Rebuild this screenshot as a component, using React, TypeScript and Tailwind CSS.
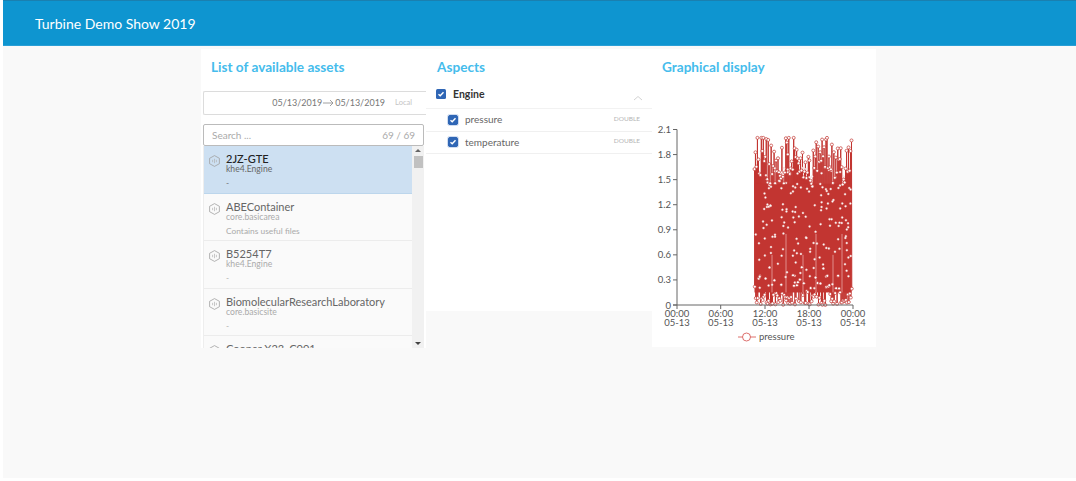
import React from "react";

const font = { fontFamily: '"Lato", "Open Sans", sans-serif' };

function rng(seed: number) {
  let s = seed;
  return () => {
    s = (s * 16807) % 2147483647;
    return (s - 1) / 2147483646;
  };
}

const W = 224;
const H = 240;
const toX = (x: number) => x - 652;
const toY = (v: number) => 198 - v * (175.5 / 2.1);

function buildPoints() {
  const r = rng(424242);
  const top: [number, number][] = [];
  const low: [number, number][] = [];
  const mid: [number, number][] = [];
  const n = 100;
  for (let i = 0; i < n; i++) {
    const x = 754.5 + (i / (n - 1)) * 97;
    const wave = 0.1 * Math.sin(i / 5);
    top.push([toX(x), toY(Math.min(2, 1.45 + wave + r() * 0.55))]);
    low.push([toX(x + 0.3), toY(r() * r() * 0.5)]);
  }
  for (let i = 0; i < 170; i++) {
    mid.push([toX(755 + r() * 96), toY(0.2 + r() * 1.45)]);
  }
  return { top, low, mid };
}

function Chart() {
  const { top, low, mid } = buildPoints();
  const zig = top.flatMap((p, i) => [p, low[i]]);
  const line = zig.map((p) => p.join(",")).join(" ");
  const yt = ["0", "0.3", "0.6", "0.9", "1.2", "1.5", "1.8", "2.1"];
  const xt = [
    [677, "00:00", "05-13"],
    [720.7, "06:00", "05-13"],
    [765, "12:00", "05-13"],
    [809, "18:00", "05-13"],
    [853, "00:00", "05-14"],
  ] as [number, string, string][];
  const slits = [772, 786, 803, 816, 833, 842];
  return (
    <svg width={W} height={H} viewBox={`0 0 ${W} ${H}`} className="block" style={{ fontFamily: '"Lato", sans-serif' }}>
      <polyline points={line} fill="none" stroke="#c23531" strokeWidth={1} />
      <rect x={toX(754.5)} y={toY(1.45)} width={97} height={toY(0.15) - toY(1.45)} fill="#c23531" />
      {slits.map((x, i) => (
        <line key={i} x1={toX(x)} x2={toX(x)} y1={toY(i % 2 ? 0.85 : 0.6)} y2={toY(0.15)} stroke="#e8a5a3" strokeWidth={0.8} />
      ))}
      {mid.map((p, i) => (
        <circle key={i} cx={p[0]} cy={p[1]} r={1} fill="#fff" stroke="#e9b5b3" strokeWidth={0.4} />
      ))}
      {top.concat(low).map((p, i) => (
        <circle key={i} cx={p[0]} cy={p[1]} r={1.5} fill="#fff" stroke="#c23531" strokeWidth={0.7} />
      ))}
      <line x1={toX(677)} x2={toX(677)} y1={toY(2.1)} y2={toY(0)} stroke="#666" strokeWidth={1} />
      <line x1={toX(673)} x2={toX(853)} y1={toY(0)} y2={toY(0)} stroke="#666" strokeWidth={1} />
      {yt.map((t, i) => {
        const v = i * 0.3;
        return (
          <g key={t}>
            <line x1={toX(673)} x2={toX(677)} y1={toY(v)} y2={toY(v)} stroke="#666" />
            <text x={toX(671)} y={toY(v) + 3.5} textAnchor="end" fontSize={9.5} fill="#555">{t}</text>
          </g>
        );
      })}
      {xt.map(([x, a, b], i) => (
        <g key={i}>
          <line x1={toX(x)} x2={toX(x)} y1={toY(0)} y2={toY(0) + 4} stroke="#666" />
          <text x={toX(x)} y={210} textAnchor="middle" fontSize={9.5} fill="#555">{a}</text>
          <text x={toX(x)} y={219} textAnchor="middle" fontSize={9.5} fill="#555">{b}</text>
        </g>
      ))}
      <line x1={86} x2={104} y1={230} y2={230} stroke="#d9605c" strokeWidth={0.9} />
      <circle cx={94.5} cy={230} r={4} fill="#fff" stroke="#d9605c" strokeWidth={0.9} />
      <text x={107} y={233} fontSize={9.5} fill="#555">pressure</text>
    </svg>
  );
}

function AssetIcon() {
  return (
    <svg width="11" height="12" viewBox="0 0 11 12" className="shrink-0 mt-[2px]">
      <path d="M5.5.6 10.4 3.3v5.4L5.5 11.4.6 8.7V3.3z" fill="none" stroke="#a0a0a0" strokeWidth="0.8" />
      <path d="M3.6 4.8v2.4M5.5 3.8v4.4M7.4 4.8v2.4" stroke="#b0b0b0" strokeWidth="0.7" />
    </svg>
  );
}

function Asset({ name, type, desc, active }: { name: string; type: string; desc: string; active?: boolean }) {
  return (
    <div className={`h-[47.5px] shrink-0 border-b flex gap-[6px] pl-[5px] pt-[7px] ${active ? "bg-[#cde0f2] border-[#bcd6ec]" : "bg-[#fafafa] border-[#ececec]"}`}>
      <AssetIcon />
      <div>
        <div className={`text-[11px] leading-[12px] whitespace-nowrap ${active ? "text-[#222] font-medium" : "text-[#666]"}`}>{name}</div>
        <div className={`text-[8.6px] leading-[9px] ${active ? "text-[#666]" : "text-[#aaa]"}`}>{type}</div>
        <div className={`text-[8.4px] leading-[10px] mt-[4px] ${active ? "text-[#666]" : "text-[#aaa]"}`}>{desc}</div>
      </div>
    </div>
  );
}

function Check({ small }: { small?: boolean }) {
  return (
    <span className={`w-[10px] h-[10px] rounded-[1.5px] bg-[#2f66b5] flex items-center justify-center shrink-0 ${small ? "outline outline-1 outline-[#cfdcf0]" : ""}`}>
      <svg width="8" height="8" viewBox="0 0 8 8">
        <path d="M1.5 4.3 3.2 5.8 6.5 2.2" fill="none" stroke="#fff" strokeWidth="1.4" />
      </svg>
    </span>
  );
}

function Aspect({ label }: { label: string }) {
  return (
    <div className="h-[22.5px] border-b border-[#f0f0f0] flex items-center pl-[22px] pr-[12px]">
      <Check small />
      <span className="ml-[7px] text-[10px] text-[#666] -translate-y-[0.5px]">{label}</span>
      <span className="ml-auto text-[6.5px] text-[#b5b5b5] -translate-y-[1px]">DOUBLE</span>
    </div>
  );
}

export default function App() {
  return (
    <div className="w-[1076px] h-[481px] bg-white pl-[3px] overflow-hidden" style={font}>
      <div className="h-[478px] bg-[#f9f9f9] flex flex-col">
        <header className="h-[46px] shrink-0 bg-[#0e95d0] border-t border-t-[#1a80b0] border-b border-b-[#2a9fd6] flex items-center pl-[32px] pt-[2px]">
          <span className="text-white text-[14px] leading-none">Turbine Demo Show 2019</span>
        </header>
        <main className="flex pl-[198px] pt-[3px] items-start">
          <section className="w-[225px] h-[299px] shrink-0 bg-white overflow-hidden">
            <h2 className="h-[37px] pl-[10px] pt-[10px] text-[13.6px] leading-[16px] font-bold text-[#45bcec]">List of available assets</h2>
            <div className="ml-[2px] mt-[5px] h-[24px] w-[223px] border border-r-0 border-[#dcdcdc] rounded-l-[2px] flex items-center justify-end pr-[14px] text-[#777]">
              <span className="text-[9px] flex items-center gap-[1px]">05/13/2019
                <svg width="11" height="8" viewBox="0 0 11 8"><path d="M0 4h10M7 1l3 3-3 3" fill="none" stroke="#888" strokeWidth="0.8" /></svg>
                05/13/2019</span>
              <span className="ml-[10px] text-[7.5px] text-[#c4c4c4]">Local</span>
            </div>
            <div className="ml-[2px] mt-[9px] h-[22px] w-[221px] border border-[#bbb] rounded-[2px] flex items-center justify-between px-[8px] text-[10px] text-[#aaa]">
              <span>Search ...</span>
              <span>69 / 69</span>
            </div>
            <div className="ml-[2px] h-[202px] w-[221px] flex overflow-hidden">
              <div className="w-[209px] flex flex-col overflow-hidden border-l border-[#eee]">
                <Asset active name="2JZ-GTE" type="khe4.Engine" desc="-" />
                <Asset name="ABEContainer" type="core.basicarea" desc="Contains useful files" />
                <Asset name="B5254T7" type="khe4.Engine" desc="-" />
                <Asset name="BiomolecularResearchLaboratory" type="core.basicsite" desc="-" />
                <Asset name="Cooper X23_C001" type="khe4.Engine" desc="-" />
              </div>
              <div className="w-[12px] bg-[#f1f1f1] flex flex-col items-center pt-[3px] relative">
                <div className="w-0 h-0 border-x-[3px] border-x-transparent border-b-[3px] border-b-[#666]" />
                <div className="w-[9px] h-[12px] bg-[#c1c1c1] mt-[4px]" />
                <div className="absolute bottom-[3px] w-0 h-0 border-x-[3px] border-x-transparent border-t-[3px] border-t-[#444]" />
              </div>
            </div>
          </section>
          <section className="w-[226px] h-[262px] shrink-0 bg-white">
            <h2 className="h-[37px] pl-[11px] pt-[10px] text-[13.6px] leading-[16px] font-bold text-[#45bcec]">Aspects</h2>
            <div className="h-[23px] border-b border-[#f2f2f2] flex items-start pt-[3px] pl-[10px] pr-[9px]">
              <Check />
              <span className="ml-[7px] text-[10.5px] leading-[10px] font-bold text-[#333]">Engine</span>
              <svg width="10" height="6" viewBox="0 0 10 6" className="ml-auto mt-[6px]">
                <path d="M1 5 5 1.5 9 5" fill="none" stroke="#c8c8c8" strokeWidth="0.8" />
              </svg>
            </div>
            <Aspect label="pressure" />
            <Aspect label="temperature" />
          </section>
          <section className="w-[224px] h-[298px] shrink-0 bg-white">
            <h2 className="h-[58px] pl-[10px] pt-[10px] text-[13.6px] leading-[16px] font-bold text-[#45bcec]">Graphical display</h2>
            <Chart />
          </section>
        </main>
      </div>
    </div>
  );
}
